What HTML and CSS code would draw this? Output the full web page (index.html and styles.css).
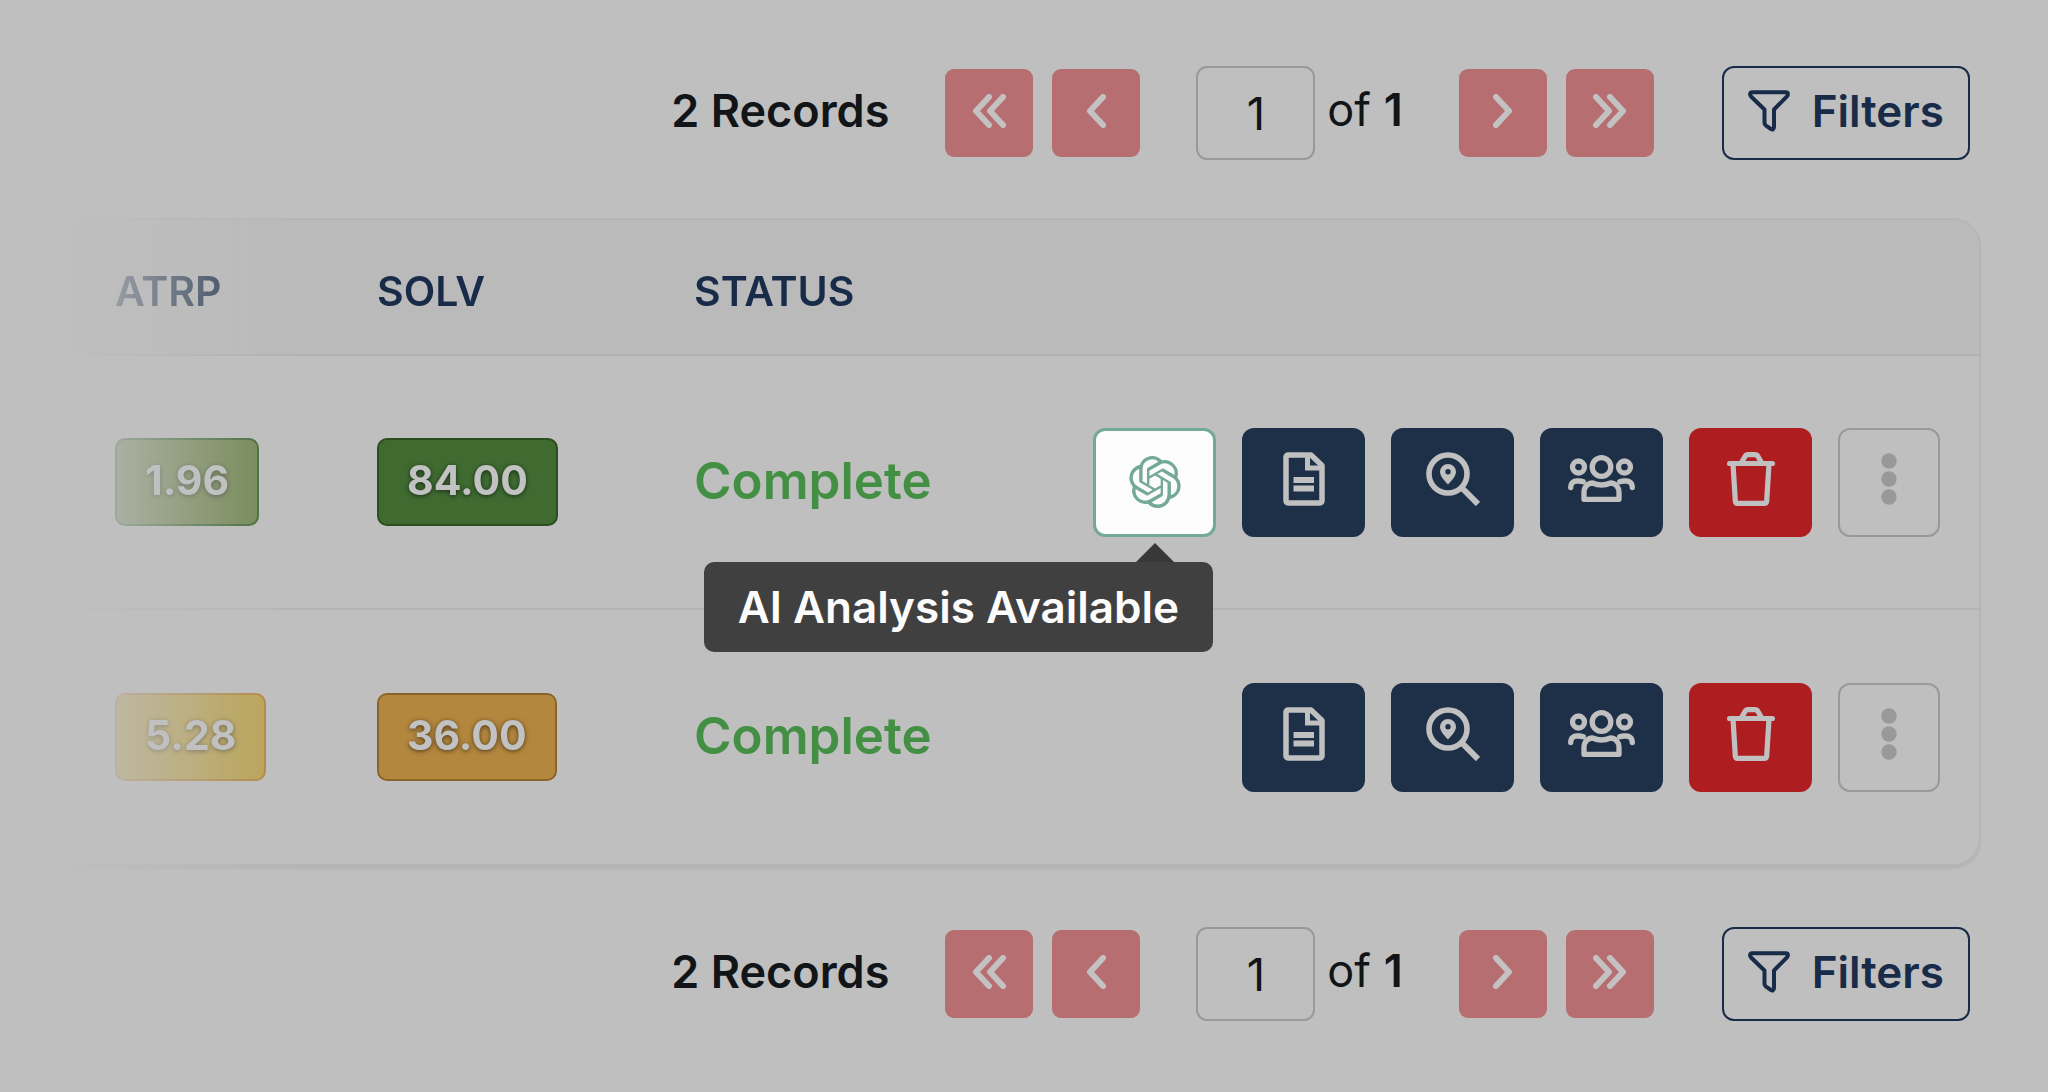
FILE: index.html
```html
<!DOCTYPE html>
<html lang="en">
<head>
    <meta charset="UTF-8">
    <meta name="viewport" content="width=device-width, initial-scale=1.0">
    <title>Records</title>
    <link rel="stylesheet" href="styles.css">
</head>
<body>

<!-- Icon sprite -->
<svg class="sprite" aria-hidden="true">
    <symbol id="icon-prev" viewBox="0 0 20 34">
        <path d="M17 3 4 17l13 14" fill="none" stroke="currentColor" stroke-width="6" stroke-linecap="round" stroke-linejoin="round"/>
    </symbol>
    <symbol id="icon-first" viewBox="0 0 34 34">
        <path d="M17 3 4 17l13 14M31 3 18 17l13 14" fill="none" stroke="currentColor" stroke-width="6" stroke-linecap="round" stroke-linejoin="round"/>
    </symbol>
    <symbol id="icon-next" viewBox="0 0 20 34">
        <path d="m3 3 13 14L3 31" fill="none" stroke="currentColor" stroke-width="6" stroke-linecap="round" stroke-linejoin="round"/>
    </symbol>
    <symbol id="icon-last" viewBox="0 0 34 34">
        <path d="m3 3 13 14L3 31M17 3l13 14-13 14" fill="none" stroke="currentColor" stroke-width="6" stroke-linecap="round" stroke-linejoin="round"/>
    </symbol>
    <symbol id="icon-filter" viewBox="0 0 42 42">
        <path d="M4 2.2h34c2 0 2.4 2.3 1.2 4L26 19.5V37c0 2.3-1.5 3-3 2l-5-3.3c-1-.7-1.5-1.5-1.5-2.7V19.5L2.8 6.2c-1.2-1.700-.8-4 1.2-4z" fill="none" stroke="currentColor" stroke-width="4" stroke-linejoin="round"/>
    </symbol>
    <symbol id="icon-ai" viewBox="0 0 24 24">
        <path fill="currentColor" d="M22.2819 9.8211a5.9847 5.9847 0 0 0-.5157-4.9108 6.0462 6.0462 0 0 0-6.5098-2.9A6.0651 6.0651 0 0 0 4.9807 4.1818a5.9847 5.9847 0 0 0-3.9977 2.9 6.0462 6.0462 0 0 0 .7427 7.0966 5.98 5.98 0 0 0 .511 4.9107 6.051 6.051 0 0 0 6.5146 2.9001A5.9847 5.9847 0 0 0 13.2599 24a6.0557 6.0557 0 0 0 5.7718-4.2058 5.9894 5.9894 0 0 0 3.9977-2.9001 6.0557 6.0557 0 0 0-.7475-7.0729zm-9.022 12.6081a4.4755 4.4755 0 0 1-2.8764-1.0408l.1419-.0804 4.7783-2.7582a.7948.7948 0 0 0 .3927-.6813v-6.7369l2.02 1.1686a.071.071 0 0 1 .038.052v5.5826a4.504 4.504 0 0 1-4.4945 4.4944zm-9.6607-4.1254a4.4708 4.4708 0 0 1-.5346-3.0137l.142.0852 4.783 2.7582a.7712.7712 0 0 0 .7806 0l5.8428-3.3685v2.3324a.0804.0804 0 0 1-.0332.0615L9.74 19.9502a4.4992 4.4992 0 0 1-6.1408-1.6464zM2.3408 7.8956a4.485 4.485 0 0 1 2.3655-1.9728V11.6a.7664.7664 0 0 0 .3879.6765l5.8144 3.3543-2.0201 1.1685a.0757.0757 0 0 1-.071 0l-4.8303-2.7865A4.504 4.504 0 0 1 2.3408 7.872zm16.5963 3.8558L13.1038 8.364 15.1192 7.2a.0757.0757 0 0 1 .071 0l4.8303 2.7913a4.4944 4.4944 0 0 1-.6765 8.1042v-5.6772a.79.79 0 0 0-.407-.667zm2.0107-3.0231l-.142-.0852-4.7735-2.7818a.7759.7759 0 0 0-.7854 0L9.409 9.2297V6.8974a.0662.0662 0 0 1 .0284-.0615l4.8303-2.7866a4.4992 4.4992 0 0 1 6.6802 4.66zM8.3065 12.863l-2.02-1.1638a.0804.0804 0 0 1-.038-.0567V6.0742a4.4992 4.4992 0 0 1 7.3757-3.4537l-.142.0805L8.704 5.459a.7948.7948 0 0 0-.3927.6813zm1.0976-2.3654l2.602-1.4998 2.6069 1.4998v2.9994l-2.5974 1.4997-2.6067-1.4997Z"/>
    </symbol>
    <symbol id="icon-report" viewBox="0 0 42 54">
        <path d="M28 3H5a2 2 0 0 0-2 2v44a2 2 0 0 0 2 2h32a2 2 0 0 0 2-2V13.5z" fill="none" stroke="currentColor" stroke-width="5.5" stroke-linejoin="round"/>
        <path d="M24.5 3v13H39" fill="none" stroke="currentColor" stroke-width="5"/>
        <path d="M10.5 28H31M10.5 36.5H31" stroke="currentColor" stroke-width="6"/>
    </symbol>
    <symbol id="icon-locate" viewBox="0 0 54 54">
        <circle cx="22" cy="22" r="19" fill="none" stroke="currentColor" stroke-width="5.6"/>
        <path d="m36 36 16 16" stroke="currentColor" stroke-width="6"/>
        <path fill="currentColor" fill-rule="evenodd" d="M22 12a8 8 0 0 1 8 8c0 4-5 9.500-8 12.500-3-3-8-8.500-8-12.500a8 8 0 0 1 8-8zm0 5a2.700 2.700 0 1 0 0 5.400 2.700 2.700 0 0 0 0-5.400z"/>
    </symbol>
    <symbol id="icon-group" viewBox="0 0 67 48">
        <g fill="none" stroke="currentColor" stroke-width="5.3">
            <circle cx="33.5" cy="12" r="9.3"/>
            <circle cx="10.5" cy="12" r="6"/>
            <circle cx="56.5" cy="12" r="6"/>
            <path d="M16 44.3v-7c0-5 3.5-9.3 8.5-9.3 3 1.3 5.5 2 9 2s6-.7 9-2c5 0 8.500 4.300 8.500 9.300v7z" stroke-linejoin="round"/>
            <path d="M2.700 32.500c0-5 3-6.500 6-6.500h2.500c1.500 0 2.500.2 4 .8M64.300 32.500c0-5-3-6.500-6-6.500h-2.500c-1.500 0-2.500.2-4 .8" stroke-linecap="round"/>
        </g>
    </symbol>
    <symbol id="icon-trash" viewBox="0 0 48 54">
        <g fill="none" stroke="currentColor" stroke-width="5.2" stroke-linejoin="round">
            <path d="M2.6 11.5h42.8" stroke-linecap="round"/>
            <path d="m14 11.5 4-7c.7-1.2 1.2-1.9 3-1.9h7c1.8 0 2.3.7 3 1.9l4 7"/>
            <path d="m6 12 2.3 37c.1 1.6.9 2.3 2.5 2.3h26.4c1.6 0 2.4-.7 2.5-2.3L42 12"/>
        </g>
    </symbol>
    <symbol id="icon-more" viewBox="0 0 16 54">
        <g fill="currentColor">
            <circle cx="8" cy="9" r="7.7"/>
            <circle cx="8" cy="27" r="7.7"/>
            <circle cx="8" cy="45" r="7.7"/>
        </g>
    </symbol>
</svg>

<nav class="toolbar" aria-label="Pagination top">
    <span class="records">2 Records</span>
    <div class="pager">
        <button type="button" class="btn-page" aria-label="First page"><svg width="34" height="34"><use href="#icon-first"/></svg></button>
        <button type="button" class="btn-page" aria-label="Previous page"><svg width="20" height="34"><use href="#icon-prev"/></svg></button>
    </div>
    <div class="page-number">
        <input type="text" id="page-top" class="page-input" value="1" aria-label="Page">
        <label for="page-top">of <b>1</b></label>
    </div>
    <div class="pager">
        <button type="button" class="btn-page" aria-label="Next page"><svg width="20" height="34"><use href="#icon-next"/></svg></button>
        <button type="button" class="btn-page" aria-label="Last page"><svg width="34" height="34"><use href="#icon-last"/></svg></button>
    </div>
    <button type="button" class="btn-filters"><svg width="42" height="42"><use href="#icon-filter"/></svg>Filters</button>
</nav>

<main class="table-section">
    <table class="records-table">
        <thead>
            <tr>
                <th class="col-atrp">ATRP</th>
                <th class="col-solv">SOLV</th>
                <th class="col-status">STATUS</th>
                <th></th>
            </tr>
        </thead>
        <tbody>
            <tr>
                <td><span class="badge badge-lime">1.96</span></td>
                <td><span class="badge badge-green">84.00</span></td>
                <td class="status">Complete</td>
                <td>
                    <div class="actions">
                        <div class="tooltip-anchor">
                            <button type="button" class="btn btn-ai" aria-describedby="ai-tip" aria-label="AI analysis"><svg width="52" height="52"><use href="#icon-ai"/></svg></button>
                            <div class="tooltip" id="ai-tip" role="tooltip">AI Analysis Available</div>
                        </div>
                        <button type="button" class="btn" aria-label="Report"><svg width="42" height="54"><use href="#icon-report"/></svg></button>
                        <button type="button" class="btn" aria-label="Locate"><svg width="54" height="54"><use href="#icon-locate"/></svg></button>
                        <button type="button" class="btn" aria-label="Group"><svg width="67" height="48"><use href="#icon-group"/></svg></button>
                        <button type="button" class="btn btn-delete" aria-label="Delete"><svg width="48" height="54"><use href="#icon-trash"/></svg></button>
                        <button type="button" class="btn btn-more" aria-label="More"><svg width="16" height="54"><use href="#icon-more"/></svg></button>
                    </div>
                </td>
            </tr>
            <tr>
                <td><span class="badge badge-yellow">5.28</span></td>
                <td><span class="badge badge-orange">36.00</span></td>
                <td class="status">Complete</td>
                <td>
                    <div class="actions">
                        <button type="button" class="btn" aria-label="Report"><svg width="42" height="54"><use href="#icon-report"/></svg></button>
                        <button type="button" class="btn" aria-label="Locate"><svg width="54" height="54"><use href="#icon-locate"/></svg></button>
                        <button type="button" class="btn" aria-label="Group"><svg width="67" height="48"><use href="#icon-group"/></svg></button>
                        <button type="button" class="btn btn-delete" aria-label="Delete"><svg width="48" height="54"><use href="#icon-trash"/></svg></button>
                        <button type="button" class="btn btn-more" aria-label="More"><svg width="16" height="54"><use href="#icon-more"/></svg></button>
                    </div>
                </td>
            </tr>
        </tbody>
    </table>
</main>

<nav class="toolbar" aria-label="Pagination bottom">
    <span class="records">2 Records</span>
    <div class="pager">
        <button type="button" class="btn-page" aria-label="First page"><svg width="34" height="34"><use href="#icon-first"/></svg></button>
        <button type="button" class="btn-page" aria-label="Previous page"><svg width="20" height="34"><use href="#icon-prev"/></svg></button>
    </div>
    <div class="page-number">
        <input type="text" id="page-bottom" class="page-input" value="1" aria-label="Page">
        <label for="page-bottom">of <b>1</b></label>
    </div>
    <div class="pager">
        <button type="button" class="btn-page" aria-label="Next page"><svg width="20" height="34"><use href="#icon-next"/></svg></button>
        <button type="button" class="btn-page" aria-label="Last page"><svg width="34" height="34"><use href="#icon-last"/></svg></button>
    </div>
    <button type="button" class="btn-filters"><svg width="42" height="42"><use href="#icon-filter"/></svg>Filters</button>
</nav>

</body>
</html>
```
FILE: styles.css
```css
* {
    box-sizing: border-box;
}
body {
    font-family: Inter, Arial, sans-serif;
    font-size: 45px;
    margin: 0;
    padding: 66px 0;
    background-color: #bfbfbf;
    color: #121518;
}
button, input {
    font: inherit;
}
button {
    cursor: pointer;
}
.sprite {
    display: none;
}

/* Pagination bar */
.toolbar {
    display: flex;
    justify-content: flex-end;
    align-items: center;
    padding-right: 78px;
    line-height: 56px;
}
.records {
    font-weight: 600;
    margin-right: 56px;
    padding-bottom: 4px;
}
.pager {
    display: flex;
    gap: 19px;
}
.btn-page {
    display: flex;
    align-items: center;
    justify-content: center;
    width: 88px;
    height: 88px;
    padding: 0 0 4px;
    border: none;
    border-radius: 9px;
    background-color: #b66e70;
    color: #c3c1c2;
}
.btn-page svg {
    overflow: visible;
}
.page-number {
    display: flex;
    align-items: center;
    gap: 12px;
    margin: 0 56px;
}
.page-number label {
    padding-bottom: 6px;
}
.page-number b {
    font-weight: 600;
}
.page-input {
    width: 119px;
    height: 94px;
    border: 2px solid #999;
    border-radius: 11px;
    background: transparent;
    color: #121518;
    text-align: center;
}
.btn-filters {
    display: flex;
    align-items: center;
    gap: 22px;
    height: 94px;
    margin-left: 68px;
    padding: 0 24px 4px;
    border: 2px solid #182b48;
    border-radius: 12px;
    background: transparent;
    color: #182b48;
    font-weight: 600;
    font-size: 44px;
}

/* Records table, fades out to the left */
.table-section {
    padding: 58px 67px 61px 50px;
    -webkit-mask-image: linear-gradient(to right, transparent 60px, #000 300px);
    mask-image: linear-gradient(to right, transparent 60px, #000 300px);
}
.records-table {
    width: 100%;
    border: 2px solid #b5b5b5;
    border-radius: 28px;
    border-spacing: 0;
    box-shadow: 0 3px 2px #b4b4b4;
}
.records-table th {
    height: 136px;
    padding: 8px 0 0;
    border-bottom: 2px solid #b1b1b1;
    background-color: #bababa;
    color: #182b48;
    font-size: 41px;
    font-weight: 600;
    text-align: left;
}
.records-table th:last-child {
    border-top-right-radius: 26px;
}
.records-table td {
    height: 254px;
    padding: 0;
}
.records-table tbody tr:first-child td {
    border-bottom: 2px solid #b5b5b5;
}
.records-table th:first-child, .records-table td:first-child {
    padding-left: 63px;
}
.records-table td:last-child {
    padding-right: 39px;
}
.col-atrp {
    width: 325px;
}
.col-solv {
    width: 317px;
}
.col-status {
    width: 300px;
}
.badge {
    display: inline-block;
    padding: 0 28px 4px;
    border: 2px solid;
    border-radius: 10px;
    color: #c2c2c2;
    font-size: 41px;
    font-weight: 700;
    line-height: 80px;
    text-shadow: 0 1px 5px rgba(0, 0, 0, 0.6);
    vertical-align: middle;
}
.badge-lime {
    background-color: #6c8249;
    border-color: #35642a;
}
.badge-green {
    background-color: #3f6b31;
    border-color: #2a4e20;
}
.badge-yellow {
    background-color: #baa14b;
    border-color: #b0843a;
}
.badge-orange {
    background-color: #b4873e;
    border-color: #8a642b;
}
.records-table .status {
    padding-bottom: 4px;
    color: #438f43;
    font-size: 51px;
    font-weight: 600;
}

/* Row actions */
.actions {
    display: flex;
    justify-content: flex-end;
    gap: 26px;
}
.btn {
    display: flex;
    align-items: center;
    justify-content: center;
    width: 123px;
    height: 109px;
    padding: 0 0 6px;
    border: none;
    border-radius: 12px;
    background-color: #1e2f48;
    color: #c0c0c0;
}
.btn-ai {
    padding: 0;
    border: 3px solid #73a995;
    background-color: #fcfcfc;
    color: #73a995;
}
.btn-delete {
    background-color: #ae1e21;
}
.btn-more {
    width: 102px;
    border: 2px solid #999;
    background: transparent;
    color: #98999b;
}
.tooltip-anchor {
    position: relative;
}
.tooltip {
    position: absolute;
    top: 134px;
    right: 3px;
    padding: 0 34px;
    border-radius: 10px;
    background-color: #404040;
    color: #fcfcfc;
    font-size: 44px;
    font-weight: 600;
    line-height: 90px;
    white-space: nowrap;
}
.tooltip::before {
    content: "";
    position: absolute;
    bottom: 100%;
    right: 39px;
    border: 19px solid transparent;
    border-top-width: 0;
    border-bottom-color: #383838;
}
```
